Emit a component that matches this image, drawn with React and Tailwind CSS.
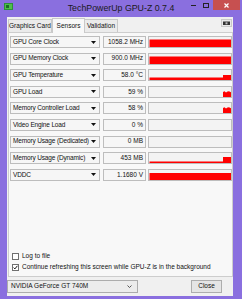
import React from 'react'

const rows = [
  { label: 'GPU Core Clock', value: '1058.2 MHz', graph: 'full' },
  { label: 'GPU Memory Clock', value: '900.0 MHz', graph: 'full' },
  { label: 'GPU Temperature', value: '58.0 °C', graph: 'temp' },
  { label: 'GPU Load', value: '59 %', graph: 'spike' },
  { label: 'Memory Controller Load', value: '58 %', graph: 'spike' },
  { label: 'Video Engine Load', value: '0 %', graph: null },
  { label: 'Memory Usage (Dedicated)', value: '0 MB', graph: null },
  { label: 'Memory Usage (Dynamic)', value: '453 MB', graph: 'dyn' },
  { label: 'VDDC', value: '1.1680 V', graph: 'vddc' },
]

const Graph = ({ type }) => (
  <svg width="82" height="10" viewBox="0 0 82 10" className="block">
    {type === 'full' && <rect x="0.5" y="2.5" width="81.5" height="7.5" fill="#ff0000" />}
    {type === 'vddc' && <rect x="0.5" y="3" width="81.5" height="7" fill="#ff0000" />}
    {type === 'temp' && (
      <polygon points="0.5,7.5 74,7.5 74,5 82,5 82,10 0.5,10" fill="#ff0000" />
    )}
    {type === 'dyn' && (
      <polygon points="0.5,8.5 74,8.5 74,4 82,4 82,10 0.5,10" fill="#ff0000" />
    )}
    {type === 'spike' && (
      <polygon points="74,10 74,5 75.5,4.2 77,5.4 78.5,4.6 80,4.2 82,5.2 82,10" fill="#ff0000" />
    )}
  </svg>
)

const Arrow = () => (
  <svg width="5" height="3" viewBox="0 0 5 3" className="block shrink-0">
    <polygon points="0,0 5,0 2.5,3" fill="#111" />
  </svg>
)

const Check = ({ checked }) => (
  <div className="w-[7px] h-[7px] border border-[#6f6f6f] bg-white flex items-center justify-center">
    {checked && (
      <svg width="5" height="5" viewBox="0 0 5 5" className="block">
        <path d="M0.6 2.6 L1.9 3.9 L4.4 0.8" stroke="#111" strokeWidth="1" fill="none" />
      </svg>
    )}
  </div>
)

export default function App() {
  return (
    <div className="w-[242px] h-[299px] bg-[#8a6fdf] flex flex-col overflow-hidden font-['Liberation_Sans',Arial,sans-serif] text-[6.5px] leading-none text-[#111]">
      {/* title bar */}
      <div className="h-[17px] flex shrink-0">
        <div className="w-[55px] pl-[4px] pt-[3px]">
          <svg width="9" height="7" viewBox="0 0 9 7" className="block">
            <rect x="0" y="0" width="9" height="7" fill="#2f8f3a" />
            <rect x="1" y="1" width="7" height="5" fill="#4fbf4a" />
            <rect x="2" y="2" width="3" height="3" fill="#1d6b28" />
          </svg>
        </div>
        <div className="flex-1 text-center text-[8.8px] text-[#1a1a1a] pt-[4px]">TechPowerUp GPU-Z 0.7.4</div>
        <div className="w-[55px] flex items-start">
          <div className="w-[12px] h-[11px] flex items-center justify-center">
            <div className="w-[5px] h-[1px] bg-[#222]"></div>
          </div>
          <div className="w-[14px] h-[11px] flex items-center justify-center">
            <div className="w-[6px] h-[5px] border border-[#222] border-t-[1.5px]"></div>
          </div>
          <div className="w-[27px] h-[10px] bg-[#c75050] flex items-center justify-center">
            <svg width="5" height="5" viewBox="0 0 5 5" className="block">
              <path d="M0.5 0.5 L4.5 4.5 M4.5 0.5 L0.5 4.5" stroke="#fff" strokeWidth="1.2" />
            </svg>
          </div>
        </div>
      </div>

      {/* window body */}
      <div className="flex-1 ml-[7px] mr-[9px] mb-[3px] bg-[#f0f0f0] flex flex-col">
        {/* tabs */}
        <div className="h-[15px] flex items-end pl-[1px] shrink-0">
          <div className="h-[13px] w-[44px] border border-b-0 border-[#c9c9c9] bg-[#ebebeb] flex items-center justify-center whitespace-nowrap">Graphics Card</div>
          <div className="h-[15px] w-[33px] border border-b-0 border-[#c9c9c9] bg-[#f8f8f8] flex items-center justify-center -mb-px relative">Sensors</div>
          <div className="h-[13px] w-[33px] border border-b-0 border-l-0 border-[#c9c9c9] bg-[#ebebeb] flex items-center justify-center">Validation</div>
          <div className="ml-auto self-start mt-[2px] mr-[1px] w-[11px] h-[8px] border border-[#c9c9c9] bg-[#e8e8e8] flex items-center justify-center">
            <svg width="7" height="4" viewBox="0 0 7 4" className="block">
              <rect x="0" y="0.5" width="7" height="3.5" fill="#333" />
              <rect x="2.5" y="1.3" width="2" height="2" fill="#bbb" />
            </svg>
          </div>
        </div>

        {/* sensors panel */}
        <div className="ml-[1px] h-[245px] border border-[#cdcdcd] bg-[#f8f8f8] flex flex-col pl-[1px] pt-[3px]">
          <div className="flex flex-col gap-[4.6px]">
            {rows.map((r) => (
              <div key={r.label} className="flex h-[12px]">
                <div className="w-[90px] border border-[#bdbdbd] bg-[#f6f6f6] flex items-center pl-[2px] pr-[3px]">
                  <span className="flex-1 whitespace-nowrap tracking-[-0.15px]">{r.label}</span>
                  <Arrow />
                </div>
                <div className="ml-[3px] w-[43px] border border-[#bdbdbd] bg-[#f6f6f6] flex items-center justify-end pr-[2px] whitespace-nowrap">{r.value}</div>
                <div className="ml-[2px] w-[84px] border border-[#bdbdbd] bg-[#f3f3f3] flex items-end">
                  <Graph type={r.graph} />
                </div>
              </div>
            ))}
          </div>
          <div className="flex-1"></div>
          <div className="flex flex-col gap-[4px] pl-[2px] pb-[5px]">
            <div className="flex items-center gap-[3px]">
              <Check checked={false} />
              <span>Log to file</span>
            </div>
            <div className="flex items-center gap-[3px]">
              <Check checked={true} />
              <span className="whitespace-nowrap">Continue refreshing this screen while GPU-Z is in the background</span>
            </div>
          </div>
        </div>

        {/* bottom bar */}
        <div className="flex items-start pt-[3px]">
          <div className="w-[131px] h-[13px] border border-[#acacac] bg-[#ececec] flex items-center pl-[3px] pr-[5px]">
            <span className="flex-1 whitespace-nowrap">NVIDIA GeForce GT 740M</span>
            <svg width="5" height="3" viewBox="0 0 5 3" className="block">
              <path d="M0.5 0.5 L2.5 2.5 L4.5 0.5" stroke="#444" strokeWidth="0.9" fill="none" />
            </svg>
          </div>
          <div className="ml-auto mr-[11px] w-[31px] h-[13px] border border-[#adadad] bg-[#e5e5e5] flex items-center justify-center">Close</div>
        </div>
      </div>
    </div>
  )
}
